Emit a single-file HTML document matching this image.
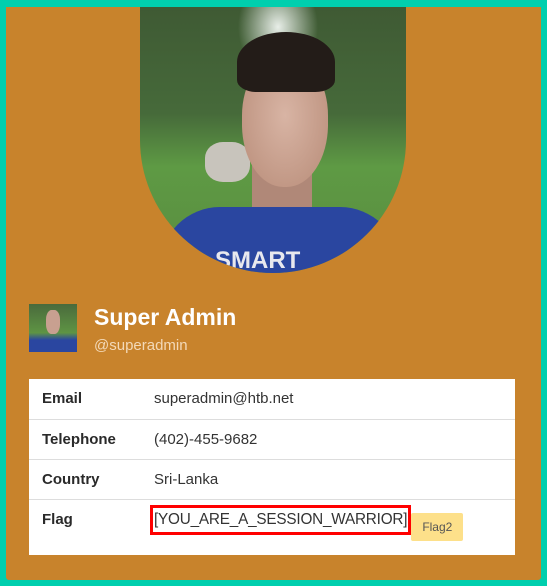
<!DOCTYPE html>
<html><head><style>
html,body{margin:0;padding:0}
body{width:547px;height:586px;background:#00cfae;position:relative;overflow:hidden;font-family:"Liberation Sans",sans-serif}
.card{position:absolute;left:6px;top:7px;width:535px;height:573px;background:#c8832c;border-radius:0 0 3px 3px}
.photo{position:absolute;left:140px;top:7px;width:266px;height:266px;border-radius:0 0 133px 133px;overflow:hidden;
background:radial-gradient(ellipse 40px 50px at 138px 20px,#e8eee8,rgba(0,0,0,0)),linear-gradient(#3f5a34 0,#466a3a 40%,#5e9a44 60%,#5a8c40 100%)}
.photo .rock{position:absolute;left:65px;top:135px;width:45px;height:40px;background:#c8c4bc;border-radius:40%}
.photo .neck{position:absolute;left:112px;top:150px;width:60px;height:60px;background:#b08878}
.photo .face{position:absolute;left:102px;top:50px;width:86px;height:130px;background:radial-gradient(ellipse at 50% 45%,#d8b4a4,#b88c78);border-radius:45% 45% 48% 48%}
.photo .hair{position:absolute;left:97px;top:25px;width:98px;height:60px;background:#231c18;border-radius:50% 50% 20% 20%}
.photo .shirt{position:absolute;left:20px;top:200px;width:240px;height:80px;background:#2a46a0;border-radius:60px 60px 0 0}
.photo .txt{position:absolute;left:75px;top:240px;color:#e8e8ee;font-weight:bold;font-size:24px}
.av{position:absolute;left:29px;top:304px;width:48px;height:48px;background:linear-gradient(#4a6a3c,#5e9444 60%,#2a46a0 75%)}
.av i{position:absolute;left:17px;top:6px;width:14px;height:24px;background:#c8a090;border-radius:40%}
.name{position:absolute;left:94px;top:304px;color:#fff;font-weight:bold;font-size:23px}
.user{position:absolute;left:94px;top:337px;color:#f3d9b8;font-size:15px}
table{position:absolute;left:29px;top:379px;width:486px;background:#fff;border-collapse:collapse;table-layout:fixed;font-size:15px;color:#333}
td{height:40px;border-top:1px solid #ddd;padding:0;vertical-align:middle;box-sizing:border-box}
tr:first-child td{border-top:none}
td.l{padding-left:13px;font-weight:bold;color:#2a2a2a}
tr.f td{height:56px;vertical-align:top;padding-top:11px}
.flag{display:inline-block;border:3px solid #f00;padding:3px 1px;margin-left:-4px;margin-top:-7px;font-size:15.3px;letter-spacing:-0.2px;color:#333;white-space:nowrap}
.btn{display:inline-block;background:#fde08a;color:#555;font-size:12px;padding:7px 11px;border-radius:2px;vertical-align:top;margin-top:2px}
</style></head><body>
<div class="card"></div>
<div class="photo"><div class="rock"></div><div class="neck"></div><div class="face"></div><div class="hair"></div><div class="shirt"></div><div class="txt">SMART</div></div>
<div class="av"><i></i></div>
<div class="name">Super Admin</div>
<div class="user">@superadmin</div>
<table>
<colgroup><col style="width:125px"><col></colgroup>
<tr><td class="l">Email</td><td>superadmin@htb.net</td></tr>
<tr><td class="l">Telephone</td><td>(402)-455-9682</td></tr>
<tr><td class="l">Country</td><td>Sri-Lanka</td></tr>
<tr class="f"><td class="l">Flag</td><td style="white-space:nowrap"><span class="flag">[YOU_ARE_A_SESSION_WARRIOR]</span><span class="btn">Flag2</span></td></tr>
</table>
</body></html>
